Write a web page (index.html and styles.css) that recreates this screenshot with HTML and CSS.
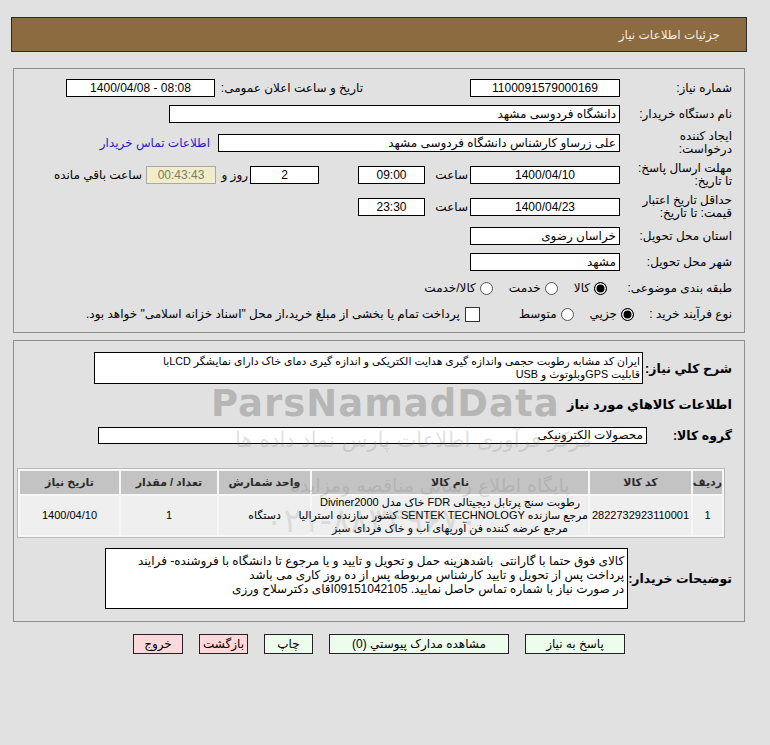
FILE: index.html
```html
<!DOCTYPE html>
<html lang="fa" dir="rtl">
<head>
<meta charset="utf-8">
<title>جزئیات اطلاعات نیاز</title>
<link rel="stylesheet" href="styles.css">
</head>
<body>
<div class="page">
  <div class="titlebar">جزئیات اطلاعات نیاز</div>

  <div class="panel first">
    <div class="row">
      <div class="lbl w112">شماره نیاز:</div>
      <div class="box center w150">1100091579000169</div>
      <div class="gap107"></div>
      <div class="lbl w148">تاریخ و ساعت اعلان عمومی:</div>
      <div class="box center w149 ltr">1400/04/08 - 08:08</div>
    </div>
    <div class="row">
      <div class="lbl w112">نام دستگاه خریدار:</div>
      <div class="box w451">دانشگاه فردوسی مشهد</div>
    </div>
    <div class="row tall">
      <div class="lbl w112 two">ایجاد کننده<br>درخواست:</div>
      <div class="box w402">علی زرساو کارشناس دانشگاه فردوسی مشهد</div>
      <a class="link" href="#">اطلاعات تماس خریدار</a>
    </div>
    <div class="row tall">
      <div class="lbl w112 two">مهلت ارسال پاسخ:<br>تا تاریخ:</div>
      <div class="box center w150">1400/04/10</div>
      <div class="cell w45">ساعت</div>
      <div class="box center w67">09:00</div>
      <div class="gap39"></div>
      <div class="box center w69">2</div>
      <div class="cell w34">روز و</div>
      <div class="box center w70 timer">00:43:43</div>
      <div class="remain">ساعت باقي مانده</div>
    </div>
    <div class="row tall">
      <div class="lbl w112 two">حداقل تاریخ اعتبار<br>قیمت: تا تاریخ:</div>
      <div class="box center w150">1400/04/23</div>
      <div class="cell w45">ساعت</div>
      <div class="box center w67">23:30</div>
    </div>
    <div class="row">
      <div class="lbl w112">استان محل تحویل:</div>
      <div class="box w150">خراسان رضوی</div>
    </div>
    <div class="row">
      <div class="lbl w112">شهر محل تحویل:</div>
      <div class="box w150">مشهد</div>
    </div>
    <div class="row">
      <div class="lbl w112">طبقه بندی موضوعی:</div>
      <div class="opts subject">
        <span class="opt"><span class="radio on"></span>کالا</span>
        <span class="opt"><span class="radio"></span>خدمت</span>
        <span class="opt"><span class="radio"></span>کالا/خدمت</span>
      </div>
    </div>
    <div class="row">
      <div class="lbl w98">نوع فرآیند خرید :</div>
      <div class="opts">
        <span class="opt"><span class="radio on"></span>جزيي</span>
        <span class="opt"><span class="radio"></span>متوسط</span>
        <span class="opt wide"><span class="check"></span>پرداخت تمام یا بخشی از مبلغ خرید،از محل "اسناد خزانه اسلامی" خواهد بود.</span>
      </div>
    </div>
  </div>

  <div class="panel second">
    <div class="row desc">
      <div class="lbl bold w89">شرح کلي نياز:</div>
      <div class="box multi w549">ایران کد مشابه رطوبت حجمی واندازه گیری هدایت الکتریکی و اندازه گیری دمای خاک دارای نمایشگر LCDبا<br>قابلیت GPSوبلوتوث و USB</div>
    </div>
    <div class="heading">اطلاعات کالاهاي مورد نياز</div>
    <div class="row group">
      <div class="lbl bold w85">گروه کالا:</div>
      <div class="box w549">محصولات الکترونیکی</div>
    </div>

    <table class="items">
      <colgroup>
        <col class="c-row"><col class="c-code"><col class="c-name"><col class="c-unit"><col class="c-qty"><col class="c-date">
      </colgroup>
      <thead>
        <tr>
          <th>ردیف</th><th>کد کالا</th><th>نام کالا</th><th>واحد شمارش</th><th>تعداد / مقدار</th><th>تاریخ نیاز</th>
        </tr>
      </thead>
      <tbody>
        <tr>
          <td>1</td>
          <td>2822732923110001</td>
          <td>رطوبت سنج پرتابل دیجیتالی FDR خاک مدل Diviner2000<br>مرجع سازنده SENTEK TECHNOLOGY کشور سازنده استرالیا<br>مرجع عرضه کننده فن آوریهای آب و خاک فردای سبز</td>
          <td>دستگاه</td>
          <td>1</td>
          <td>1400/04/10</td>
        </tr>
      </tbody>
    </table>

    <div class="row notes">
      <div class="lbl bold w101">توضیحات خریدار:</div>
      <div class="box multi w523">کالای فوق حتما با گارانتی&nbsp; باشدهزینه حمل و تحویل و تایید و یا مرجوع تا دانشگاه با فروشنده- فرایند<br>پرداخت پس از تحویل و تایید کارشناس مربوطه پس از ده روز کاری می باشد<br>در صورت نیاز با شماره تماس حاصل نمایید. 09151042105اقای دکترسلاح ورزی</div>
    </div>
  </div>

  <div class="buttons">
    <span class="btn green w100">پاسخ به نیاز</span>
    <span class="btn green w180">مشاهده مدارک پيوستي (0)</span>
    <span class="btn green w49">چاپ</span>
    <span class="btn pink w49">بازگشت</span>
    <span class="btn pink w50">خروج</span>
  </div>

  <div class="wm wm-latin">ParsNamadData</div>
  <div class="wm wm-fa1">مرکز فرآوری اطلاعات پارس نماد داده ها</div>
  <div class="wm wm-fa2">پایگاه اطلاع رسانی مناقصه ومزایده</div>
  <div class="wm wm-fa3">۰۲۱-۸۸۳۴۹۶۷۰</div>
</div>
</body>
</html>
```

FILE: styles.css
```css
html, body {
  margin: 0;
  padding: 0;
}
body {
  background: #e1e1e1;
  font-family: "Liberation Sans", "DejaVu Sans", sans-serif;
  font-size: 12px;
  color: #000;
  direction: rtl;
}
.page {
  position: relative;
  padding: 17px 25px 0 13px;
  height: 728px;
  box-sizing: content-box;
}
.titlebar {
  margin: 0 -2px;
  height: 35px;
  box-sizing: border-box;
  background: #8b6b3f;
  border: 1px solid #2a2a2a;
  color: #f4ede2;
  font-size: 12px;
  display: flex;
  align-items: center;
  padding-right: 26px;
}
.panel {
  border: 1px solid #8e8e8e;
  padding: 0 12px 0 0;
}
.panel.first {
  margin-top: 16px;
  padding-top: 6px;
  padding-bottom: 5px;
}
.panel.second {
  margin-top: 7px;
  padding-top: 11px;
  padding-bottom: 12px;
}
.row {
  display: flex;
  align-items: center;
  height: 26px;
  white-space: nowrap;
}
.row.tall { height: 32px; }
.lbl {
  flex: none;
  min-width: max-content;
  text-align: right;
}
.lbl.two {
  line-height: 13px;
  white-space: normal;
  min-width: 0;
}
.lbl.bold {
  font-weight: bold;
  font-size: 12.5px;
}
.heading {
  font-weight: bold;
  font-size: 13px;
}
.w85 { width: 85px; }
.w89 { width: 89px; }
.w98 { width: 98px; }
.w101 { width: 101px; }
.w112 { width: 112px; }
.w148 { width: 148px; }
.w34 { width: 34px; }
.w45 { width: 45px; }
.w49 { width: 49px; }
.w50 { width: 50px; }
.w67 { width: 67px; }
.w69 { width: 69px; }
.w70 { width: 70px; }
.w100 { width: 100px; }
.w149 { width: 149px; }
.w150 { width: 150px; }
.w180 { width: 180px; }
.w402 { width: 402px; }
.w451 { width: 451px; }
.w523 { width: 523px; }
.w549 { width: 549px; }
.gap107 { width: 107px; flex: none; }
.gap39 { width: 39px; flex: none; }
.box {
  flex: none;
  height: 18px;
  box-sizing: border-box;
  border: 1px solid #000;
  background: #fff;
  display: flex;
  align-items: center;
  padding: 0 3px;
  overflow: hidden;
}
.box.center { justify-content: center; }
.box.ltr { direction: ltr; }
.box.timer {
  background: #f1edcb;
  border-color: #a8a8a8;
  color: #7b7b62;
}
.cell {
  flex: none;
  text-align: right;
  padding-right: 2px;
  box-sizing: border-box;
}
.remain { margin-right: 4px; }
.link {
  margin-right: 8px;
  color: #2424c4;
  text-decoration: none;
}
.opts {
  display: flex;
  align-items: center;
}
.opts.subject { margin-right: 13px; }
.opt {
  display: flex;
  align-items: center;
  gap: 4px;
  margin-left: 16px;
}
.opt.wide { margin-right: 23px; gap: 5px; }
.radio {
  width: 13px;
  height: 13px;
  box-sizing: border-box;
  border: 1px solid #555;
  border-radius: 50%;
  background: #fff;
  flex: none;
}
.radio.on {
  background: #000;
  border-color: #000;
  box-shadow: inset 0 0 0 1.5px #fff;
}
.check {
  width: 15px;
  height: 15px;
  box-sizing: border-box;
  border: 1px solid #333;
  background: #fff;
  flex: none;
}
.row.desc { height: 32px; }
.box.multi {
  display: block;
  line-height: 13px;
  white-space: nowrap;
  text-align: right;
}
.row.desc .box {
  height: 32px;
  padding: 2px 2px 0;
  font-size: 10.8px;
}
.heading {
  margin-top: 11px;
  height: 20px;
  line-height: 20px;
}
.row.group {
  margin-top: 11px;
  height: 18px;
}
.row.group .box { height: 17px; }
table.items {
  margin: 24px 7px 0 0;
  width: 708px;
  table-layout: fixed;
  border-collapse: separate;
  border-spacing: 2px;
  background: #f7f7f7;
  border: 1px solid #b9b9b9;
  box-sizing: border-box;
  font-size: 11px;
}
.c-row { width: 29px; }
.c-code { width: 101px; }
.c-name { width: 276px; }
.c-unit { width: 91px; }
.c-qty { width: 96px; }
.c-date { width: 99px; }
table.items th {
  background: #c3c3c3;
  height: 23px;
  padding: 0;
  font-weight: bold;
  color: #2b2b2b;
  white-space: nowrap;
}
table.items td {
  background: #efefef;
  height: 39px;
  padding: 0;
  text-align: center;
  line-height: 13px;
  white-space: nowrap;
}
.row.notes {
  margin-top: 10px;
  height: 61px;
}
.row.notes .box {
  height: 61px;
  padding-top: 5px;
  line-height: 14px;
}
.buttons {
  margin-top: 12px;
  display: flex;
  justify-content: center;
  gap: 16px;
}
.btn {
  height: 20px;
  box-sizing: border-box;
  border: 1px solid #222;
  display: flex;
  align-items: center;
  justify-content: center;
  font-size: 12px;
}
.btn.green { background: #ecfdec; }
.btn.pink { background: #ffd9d9; }
.wm {
  position: absolute;
  pointer-events: none;
  white-space: nowrap;
  color: rgba(140, 140, 140, 0.5);
}
.wm-latin {
  direction: ltr;
  left: 211px;
  top: 382px;
  font-family: "DejaVu Sans", sans-serif;
  font-weight: bold;
  font-size: 37px;
  letter-spacing: 1px;
}
.wm-fa1 {
  left: 235px;
  top: 428px;
  font-family: "DejaVu Sans", sans-serif;
  font-size: 21px;
  color: rgba(130, 130, 130, 0.25);
}
.wm-fa2 {
  left: 290px;
  top: 474px;
  font-family: "DejaVu Sans", sans-serif;
  font-size: 19px;
  color: rgba(130, 130, 130, 0.25);
}
.wm-fa3 {
  left: 265px;
  top: 500px;
  font-family: "DejaVu Sans", sans-serif;
  font-size: 34px;
  color: rgba(130, 130, 130, 0.2);
}
```
